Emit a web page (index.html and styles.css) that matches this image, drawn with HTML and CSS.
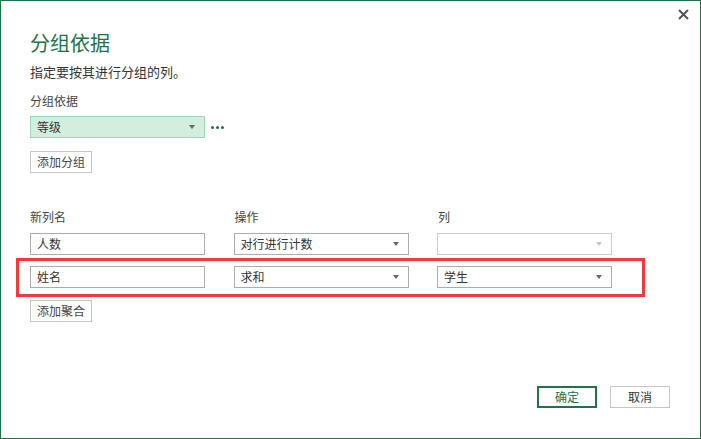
FILE: index.html
```html
<!DOCTYPE html>
<html lang="zh-CN">
<head>
<meta charset="utf-8">
<title>分组依据</title>
<link rel="stylesheet" href="styles.css">
</head>
<body>
<div class="dialog">
  <button class="close" aria-label="关闭">
    <svg width="11" height="11" viewBox="0 0 11 11"><path d="M1 1L10 10M10 1L1 10" stroke="#555" stroke-width="2" fill="none"/></svg>
  </button>
  <h1 class="title">分组依据</h1>
  <p class="subtitle">指定要按其进行分组的列。</p>
  <div class="label group-label">分组依据</div>
  <div class="group-row">
    <div class="select select-green"><span>等级</span><i class="arrow"></i></div>
    <div class="dots"><b></b><b></b><b></b></div>
  </div>
  <button class="btn btn-add-group">添加分组</button>

  <div class="grid headers">
    <div class="label">新列名</div>
    <div class="label">操作</div>
    <div class="label">列</div>
  </div>
  <div class="grid row1">
    <div class="input">人数</div>
    <div class="select"><span>对行进行计数</span><i class="arrow"></i></div>
    <div class="select disabled"><span></span><i class="arrow"></i></div>
  </div>
  <div class="highlight">
    <div class="grid">
      <div class="input">姓名</div>
      <div class="select"><span>求和</span><i class="arrow"></i></div>
      <div class="select"><span>学生</span><i class="arrow"></i></div>
    </div>
  </div>
  <button class="btn btn-add-agg">添加聚合</button>

  <div class="footer">
    <button class="btn btn-ok">确定</button>
    <button class="btn btn-cancel">取消</button>
  </div>
</div>
</body>
</html>
```
FILE: styles.css
```css
* { box-sizing: border-box; }
html, body { margin: 0; padding: 0; background: #fff; }
body {
  font-family: "Noto Sans CJK SC", "Microsoft YaHei", sans-serif;
  font-size: 12px;
  color: #333;
}
.dialog {
  position: relative;
  width: 701px;
  height: 439px;
  border: 1px solid #217346;
  padding: 0 0 0 29px;
  display: flex;
  flex-direction: column;
  align-items: flex-start;
}
.close {
  position: absolute;
  top: 8px;
  right: 11px;
  border: 0;
  background: none;
  padding: 0;
  width: 11px;
  height: 11px;
  display: flex;
}
.title {
  margin: 30px 0 0;
  font-size: 20px;
  font-weight: normal;
  line-height: 24px;
  color: #217346;
}
.subtitle {
  margin: 9px 0 0;
  font-size: 13px;
  line-height: 16px;
  color: #333;
}
.label {
  line-height: 16px;
  color: #444;
}
.group-label { margin-top: 13px; }
.group-row {
  margin-top: 7px;
  display: flex;
  align-items: center;
}
.select, .input {
  width: 175px;
  height: 22px;
  border: 1px solid #ababab;
  background: #fff;
  display: flex;
  align-items: center;
  justify-content: space-between;
  padding: 0 9px 0 6px;
  line-height: 16px;
  color: #333;
}
.select-green {
  background: #d3eede;
  border-color: #9ed5b5;
}
.select.disabled { border-color: #cccccc; }
.arrow {
  width: 0;
  height: 0;
  border-left: 3.5px solid transparent;
  border-right: 3.5px solid transparent;
  border-top: 4px solid #666;
}
.disabled .arrow { border-top-color: #c4c4c4; }
.dots {
  display: flex;
  gap: 2px;
  margin-left: 6px;
}
.dots b {
  width: 3px;
  height: 3px;
  background: #217346;
  border-radius: 50%;
}
.btn {
  font-family: inherit;
  font-size: 12px;
  height: 22px;
  padding: 0;
  border: 1px solid #c6c6c6;
  background: #fff;
  color: #444;
  line-height: 16px;
}
.btn-add-group, .btn-add-agg { width: 62px; }
.btn-add-group { margin-top: 13px; }
.grid {
  display: grid;
  grid-template-columns: 175px 175px 175px;
  column-gap: 28.5px;
}
.headers { margin-top: 36px; }
.headers .label:nth-child(n+2) { padding-left: 1px; }
.row1 { margin-top: 8px; }
.highlight {
  margin: 3px 0 0 -14px;
  width: 629px;
  border: 3px solid #f23a3d;
  padding: 5px 0 6px 11px;
}
.btn-add-agg { margin-top: 3px; }
.footer {
  margin-top: auto;
  align-self: flex-end;
  display: flex;
  gap: 13px;
  padding: 0 30px 30px 0;
}
.btn-ok, .btn-cancel { width: 60px; }
.btn-ok {
  border: 2px solid #217346;
  color: #217346;
}
.btn-cancel { border-color: #c6c6c6; color: #333; }
```
